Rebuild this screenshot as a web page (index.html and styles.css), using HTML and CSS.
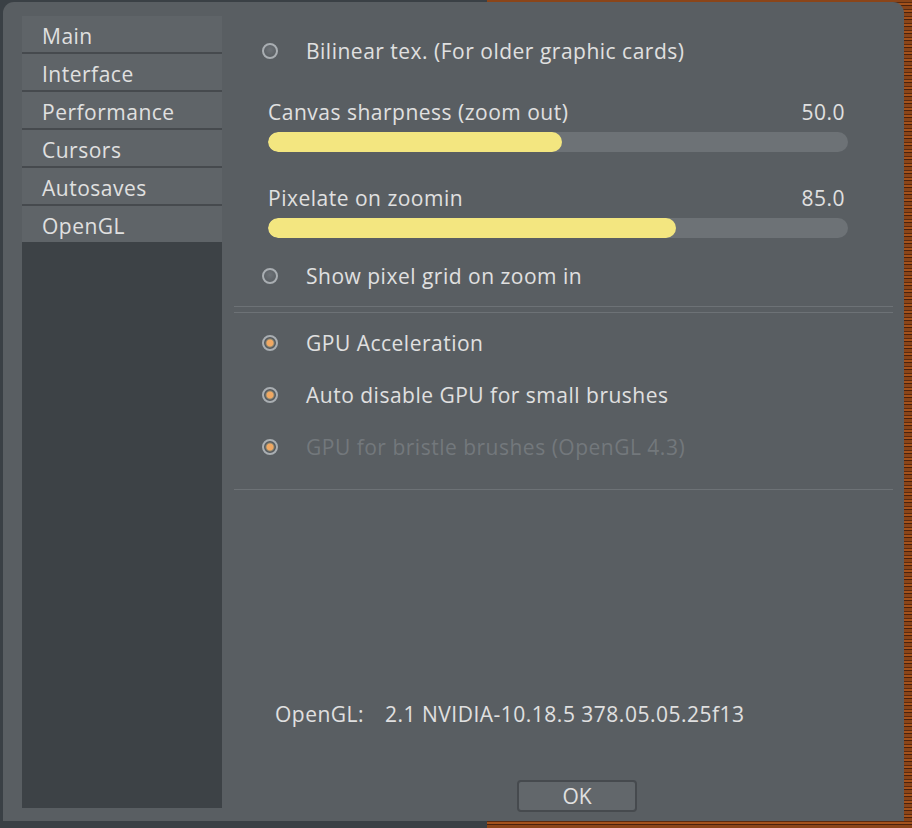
FILE: index.html
```html
<!DOCTYPE html>
<html>
<head>
<meta charset="utf-8">
<link rel="stylesheet" href="styles.css">
</head>
<body>
<div class="dialog">
  <nav class="sidebar">
    <div class="tab">Main</div>
    <div class="tab">Interface</div>
    <div class="tab">Performance</div>
    <div class="tab">Cursors</div>
    <div class="tab">Autosaves</div>
    <div class="tab tab-last">OpenGL</div>
    <div class="tab-fill"></div>
  </nav>
  <main class="content">
    <div class="opt first"><span class="radio"></span><span>Bilinear tex. (For older graphic cards)</span></div>

    <div class="slider s1">
      <div class="slider-head"><span>Canvas sharpness (zoom out)</span><span>50.0</span></div>
      <div class="track"><div class="fill" style="width:50.7%"></div></div>
    </div>
    <div class="slider s2">
      <div class="slider-head"><span>Pixelate on zoomin</span><span>85.0</span></div>
      <div class="track"><div class="fill" style="width:70.3%"></div></div>
    </div>

    <div class="opt grid-opt"><span class="radio"></span><span>Show pixel grid on zoom in</span></div>

    <div class="sep-double"></div>

    <div class="opt gpu"><span class="radio on"></span><span>GPU Acceleration</span></div>
    <div class="opt gpu2"><span class="radio on"></span><span>Auto disable GPU for small brushes</span></div>
    <div class="opt gpu2 disabled"><span class="radio on"></span><span>GPU for bristle brushes (OpenGL 4.3)</span></div>

    <div class="sep"></div>

    <div class="info"><span class="info-label">OpenGL:</span><span>2.1 NVIDIA-10.18.5 378.05.05.25f13</span></div>

    <div class="actions"><button class="ok">OK</button></div>
  </main>
</div>
</body>
</html>
```
FILE: styles.css
```css
html, body {
  margin: 0;
  padding: 0;
}
body {
  width: 912px;
  height: 828px;
  overflow: hidden;
  font-family: "Open Sans", Lato, sans-serif;
  background:
    linear-gradient(90deg, #3a4045 0 487px, transparent 487px),
    repeating-linear-gradient(0deg, #8b4519 0 3px, #4a210c 3px 4px, #a4521c 4px 6px, #5a2a10 6px 7px),
    #7a3a14;
}
.dialog {
  margin: 2px 0 0 3px;
  width: 901px;
  height: 819px;
  background: #595e62;
  border-radius: 11px 11px 0 0;
  display: flex;
  color: #e0e0e0;
  font-size: 21px;
  letter-spacing: 0.5px;
}
.sidebar {
  width: 200px;
  margin: 14px 0 13px 19px;
  display: flex;
  flex-direction: column;
}
.tab {
  height: 36px;
  line-height: 40px;
  padding-left: 20px;
  background: #5f6468;
  border-bottom: 2px solid #464a4e;
}
.tab-last {
  border-bottom: 0;
  height: 36px;
}
.tab-fill {
  flex: 1;
  background: #3d4246;
}
.content {
  flex: 1;
  display: flex;
  flex-direction: column;
}
.opt {
  height: 30px;
  display: flex;
  align-items: center;
  padding-left: 40px;
}
.opt.first { margin-top: 34px; }
.radio {
  width: 12px;
  height: 12px;
  border: 2px solid #a9aeb2;
  border-radius: 50%;
  background: radial-gradient(circle at 50% 40%, #6e7378, #54595d);
  margin-right: 28px;
  box-sizing: content-box;
  flex: none;
}
.radio.on {
  background: radial-gradient(circle, #f0a863 0 3px, #8a8570 4px, #55595d 5px);
}
.slider {
  padding: 0 56px 0 46px;
}
.s1 { margin-top: 34px; }
.s2 { margin-top: 34px; }
.slider-head {
  height: 24px;
  display: flex;
  justify-content: space-between;
  align-items: center;
  padding-right: 3px;
}
.track {
  margin-top: 8px;
  height: 20px;
  border-radius: 10px;
  background: #6d7276;
  overflow: hidden;
}
.fill {
  height: 100%;
  background: #f3e680;
  border-radius: 10px;
}
.grid-opt { margin-top: 23px; }
.sep-double {
  margin: 15px 11px 0 12px;
  height: 7px;
  border-top: 1px solid #6d7276;
  border-bottom: 1px solid #6d7276;
  box-sizing: border-box;
}
.gpu { margin-top: 15px; }
.gpu2 { margin-top: 22px; }
.disabled { color: #73787c; }
.sep {
  margin: 27px 11px 0 12px;
  height: 1px;
  background: #6d7276;
}
.info {
  margin-top: 211px;
  padding-left: 53px;
  height: 26px;
  display: flex;
  align-items: center;
}
.info-label { width: 110px; }
.actions {
  margin-top: 53px;
  display: flex;
  padding-left: 295px;
}
.ok {
  width: 120px;
  height: 32px;
  background: #62676b;
  border: 2px solid #464a4e;
  border-radius: 4px;
  color: #e0e0e0;
  font-family: "Open Sans", Lato, sans-serif;
  font-size: 21px;
  padding: 0;
}
```
